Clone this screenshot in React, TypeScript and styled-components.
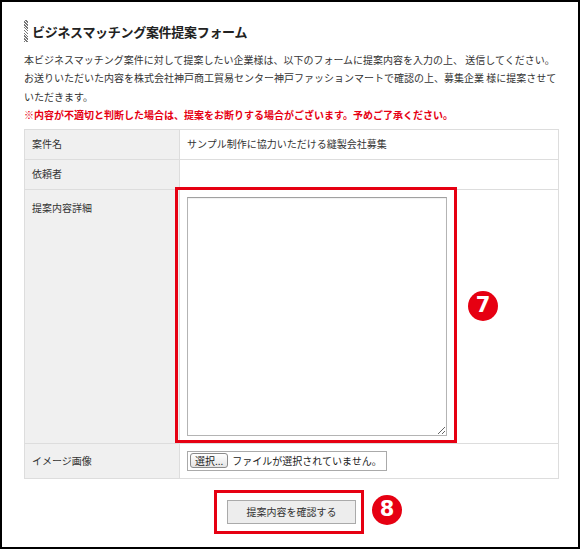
import styled, { createGlobalStyle } from "styled-components";

const GlobalStyle = createGlobalStyle`
  html, body {
    margin: 0;
    padding: 0;
    background: #fff;
  }
  body {
    font-family: "Noto Sans CJK JP", "Noto Sans", sans-serif;
    color: #333;
  }
`;

const rows = [
  { label: "案件名", value: "サンプル制作に協力いただける縫製会社募集" },
  { label: "依頼者", value: "" },
];

export default function App() {
  return (
    <>
      <GlobalStyle />
      <Frame>
        <Heading>
          <Stripe />
          <HeadingText>ビジネスマッチング案件提案フォーム</HeadingText>
        </Heading>

        <Intro>
          本ビジネスマッチング案件に対して提案したい企業様は、以下のフォームに提案内容を入力の上、 送信してください。
          <br />
          お送りいただいた内容を株式会社神戸商工貿易センター神戸ファッションマートで確認の上、募集企業 様に提案させて
          <br />
          いただきます。
          <br />
          <Warning>※内容が不適切と判断した場合は、提案をお断りする場合がございます。予めご了承ください。</Warning>
        </Intro>

        <FormGrid>
          {rows.map((r) => (
            <Row key={r.label}>
              <Label>{r.label}</Label>
              <Value>{r.value}</Value>
            </Row>
          ))}

          <Row>
            <Label $top>提案内容詳細</Label>
            <Value $top>
              <TextArea />
              <AnnotationBox $w={282} $h={256} style={{ left: -5, top: -3 }} />
              <Marker style={{ left: 288, top: 101 }}>7</Marker>
            </Value>
          </Row>

          <Row>
            <Label>イメージ画像</Label>
            <Value>
              <FileBox>
                <FileButton>選択...</FileButton>
                <FileText>ファイルが選択されていません。</FileText>
              </FileBox>
            </Value>
          </Row>
        </FormGrid>

        <ButtonRow>
          <SubmitWrap>
            <SubmitButton type="button">提案内容を確認する</SubmitButton>
            <AnnotationBox $w={150} $h={44} style={{ left: -13, top: -10 }} />
            <Marker style={{ left: 145, top: -5 }}>8</Marker>
          </SubmitWrap>
        </ButtonRow>
      </Frame>
    </>
  );
}

const Frame = styled.div`
  box-sizing: border-box;
  width: 580px;
  height: 549px;
  border: 2px solid #000;
  padding: 18px 19px 0 22px;
  overflow: hidden;
`;

const Heading = styled.div`
  display: flex;
  align-items: center;
  gap: 4px;
  height: 22px;
`;

const Stripe = styled.span`
  display: block;
  width: 4px;
  height: 22px;
  background: repeating-linear-gradient(
    45deg,
    #777 0px,
    #777 1px,
    #fff 1px,
    #fff 2px
  );
`;

const HeadingText = styled.h1`
  margin: 0;
  font-size: 13px;
  font-weight: bold;
  color: #222;
  letter-spacing: -0.3px;
`;

const Intro = styled.p`
  margin: 9px 0 4px;
  font-size: 10px;
  line-height: 18.4px;
  color: #333;
  white-space: nowrap;
`;

const Warning = styled.span`
  color: #e60012;
  font-weight: bold;
`;

const FormGrid = styled.div`
  display: grid;
  grid-template-columns: 155px 1fr;
  grid-template-rows: 30px 30px 254px 35px;
  border-top: 1px solid #ddd;
  border-left: 1px solid #ddd;
`;

const Row = styled.div`
  display: contents;
`;

const Label = styled.div<{ $top?: boolean }>`
  box-sizing: border-box;
  display: flex;
  align-items: ${({ $top }) => ($top ? "flex-start" : "center")};
  padding: ${({ $top }) => ($top ? "10px 7px 0" : "0 7px")};
  background: #f0f0f0;
  border-right: 1px solid #ddd;
  border-bottom: 1px solid #ddd;
  font-size: 10px;
  line-height: 16px;
  color: #333;
`;

const Value = styled.div<{ $top?: boolean }>`
  position: relative;
  box-sizing: border-box;
  display: flex;
  align-items: ${({ $top }) => ($top ? "flex-start" : "center")};
  padding: ${({ $top }) => ($top ? "7px 7px 0" : "0 7px")};
  border-right: 1px solid #ddd;
  border-bottom: 1px solid #ddd;
  font-size: 10px;
  line-height: 16px;
  color: #333;
`;

const TextArea = styled.textarea`
  box-sizing: border-box;
  width: 260px;
  height: 239px;
  margin: 0;
  border: 1px solid #b4b4b4;
  border-top-color: #a0a0a0;
  box-shadow: inset 0 1px 1px rgba(0, 0, 0, 0.06);
  background: #fff;
  resize: both;
`;

const FileBox = styled.div`
  box-sizing: border-box;
  display: flex;
  align-items: center;
  gap: 4px;
  width: 200px;
  height: 20px;
  padding: 0 2px;
  border: 1px solid #aaa;
  background: #fff;
`;

const FileButton = styled.span`
  box-sizing: border-box;
  display: inline-flex;
  align-items: center;
  height: 15px;
  padding: 0 4px;
  border: 1px solid #8a8a8a;
  border-radius: 3px;
  background: linear-gradient(#fff, #e4e4e4);
  font-size: 10px;
  line-height: 13px;
  color: #222;
`;

const FileText = styled.span`
  font-size: 10px;
  color: #222;
  white-space: nowrap;
`;

const ButtonRow = styled.div`
  display: flex;
  justify-content: center;
  margin-top: 21px;
`;

const SubmitWrap = styled.div`
  position: relative;
  display: inline-block;
`;

const SubmitButton = styled.button`
  box-sizing: border-box;
  display: block;
  width: 129px;
  height: 24px;
  margin: 0;
  padding: 0;
  border: 1px solid #aaa;
  background: #ededed;
  font-family: "Noto Sans CJK JP", sans-serif;
  font-size: 10px;
  color: #333;
  cursor: pointer;
`;

const AnnotationBox = styled.div<{ $w: number; $h: number }>`
  position: absolute;
  box-sizing: border-box;
  width: ${({ $w }) => $w}px;
  height: ${({ $h }) => $h}px;
  border: 3px solid #e60012;
  pointer-events: none;
`;

const Marker = styled.div`
  position: absolute;
  width: 30px;
  height: 30px;
  border-radius: 50%;
  background: #e60012;
  color: #fff;
  display: flex;
  align-items: center;
  justify-content: center;
  font-family: "DejaVu Sans", "Liberation Sans", sans-serif;
  font-weight: bold;
  font-size: 21px;
  line-height: 1;
`;
